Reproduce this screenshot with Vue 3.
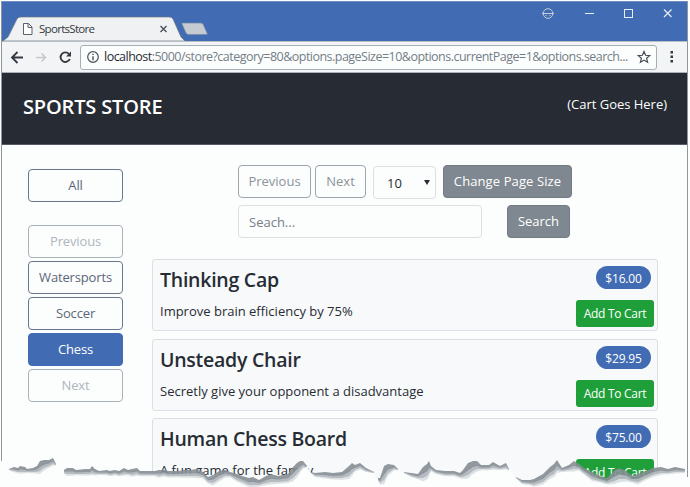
<script setup>
const categories = [
  { name: 'Previous', state: 'disabled' },
  { name: 'Watersports', state: '' },
  { name: 'Soccer', state: '' },
  { name: 'Chess', state: 'active' },
  { name: 'Next', state: 'disabled' },
]
const products = [
  { name: 'Thinking Cap', text: 'Improve brain efficiency by 75%', price: '$16.00' },
  { name: 'Unsteady Chair', text: 'Secretly give your opponent a disadvantage', price: '$29.95' },
  { name: 'Human Chess Board', text: 'A fun game for the family', price: '$75.00' },
]

// Ridge of the torn paper edge: [x, y, thickness]
const ridges = [
  [[9, 469, 1], [14, 467, 4], [18, 468, 4], [20, 466, 6], [25, 467, 5], [27, 469, 3], [33, 468, 4], [37, 466, 6], [40, 461, 10], [44, 460, 8], [49, 460, 6], [53, 458, 6], [56, 464, 1]],
  [[64, 470, 3], [67, 468, 6], [73, 468, 6], [76, 470, 4], [85, 469, 5], [90, 469, 5], [92, 466, 7], [95, 469, 5], [99, 471, 3], [107, 470, 4], [110, 471, 4], [115, 470, 4], [119, 471, 4], [124, 468, 6], [128, 470, 4], [132, 469, 6], [137, 468, 6], [140, 471, 4], [155, 471, 4], [159, 470, 6], [164, 470, 5], [168, 471, 5], [178, 471, 5], [184, 470, 6], [190, 470, 6], [197, 469, 7], [203, 472, 5], [208, 477, 5], [213, 475, 8], [219, 471, 8], [225, 470, 6], [230, 472, 4], [237, 474, 6], [242, 476, 6], [249, 478, 7], [253, 477, 8], [259, 480, 5], [266, 476, 7], [271, 474, 8], [278, 476, 6], [288, 474, 7], [293, 467, 11], [297, 463, 11], [300, 461, 9], [303, 461, 6], [307, 466, 1]],
  [[311, 472, 1], [315, 473, 3], [325, 472, 5], [333, 473, 5], [342, 472, 6], [349, 466, 10], [352, 463, 10], [355, 465, 5], [360, 463, 5], [366, 468, 3], [374, 472, 1]],
  [[378, 478, 2], [380, 478, 5], [384, 466, 14], [388, 464, 9], [394, 465, 4], [398, 469, 1]],
  [[404, 472, 1], [411, 473, 3], [418, 474, 4], [423, 467, 11], [427, 464, 12], [429, 461, 12], [431, 466, 4], [436, 470, 3], [445, 471, 4], [454, 471, 4], [460, 473, 4], [463, 470, 7], [468, 463, 12], [473, 461, 10], [477, 461, 8], [481, 465, 4], [489, 465, 4], [493, 462, 6], [500, 466, 3], [506, 463, 5], [509, 469, 1]],
  [[516, 477, 1], [522, 480, 3], [530, 480, 4], [534, 479, 6], [543, 474, 8], [550, 467, 9], [554, 464, 10], [557, 460, 10], [562, 468, 3], [569, 465, 5], [574, 461, 8], [579, 464, 5], [584, 468, 5], [592, 472, 7], [600, 476, 5], [607, 478, 5], [614, 471, 10], [619, 468, 11], [626, 471, 8], [632, 476, 5], [638, 474, 8], [646, 471, 7], [653, 468, 7], [661, 467, 6], [668, 469, 4], [675, 467, 5], [685, 469, 3]],
]
const line = (pts) => pts.map((p) => p.join(' ')).join(' L')
const band = (r, from, to) =>
  'M' + line(r.map(([x, y, t]) => [x, y + t * from])) + ' L' +
  line([...r].reverse().map(([x, y, t]) => [x, y + t * to])) + 'Z'
const paper = 'M0 461 H8 L' + line(ridges.flat().map(([x, y, t]) => [x, y + t])) + ' L690 472 V487 H0Z'
</script>

<template>
  <div class="shot">
    <div class="window">
      <div class="titlebar">
        <div class="tabs">
          <svg class="tabshape" width="208" height="25" viewBox="0 0 208 25">
            <path d="M0 25 L5 21 L14 3 Q15 1 18 1 H166 Q169 1 170 3 L178 21 L182 25Z" fill="#f0f1f3" stroke="#6c7682" stroke-width=".7" />
            <path d="M179 8 Q178 7 180 7 H197 Q199 7 200 8 L204 17 Q205 18.500 203 18.500 H186 Q184 18.500 183 17Z" fill="#c5cbd0" stroke="#7788a5" stroke-width=".7" />
            <path d="M20.500 7.500 h5 l3.500 3.500 v7.500 h-8.500z M25 7.500 v4 h4" fill="#fff" stroke="#59616a" />
            <path d="M157.500 10 l6 6 m0 -6 l-6 6" stroke="#4a515a" stroke-width="1.400" />
          </svg>
          <span class="tabname">SportsStore</span>
        </div>
        <svg class="controls" width="140" height="20" viewBox="0 0 140 20" fill="none" stroke="#e8edf5">
          <circle cx="8" cy="10.500" r="4.800" stroke="#c5ceda" />
          <path d="M2 10.500 h12 M5.500 12.500 h1 m3 0 h1" stroke="#c5ceda" />
          <path d="M45 10.500 h9" />
          <rect x="84.500" y="6.500" width="8" height="8" />
          <path d="M124 6.500 l7.500 7.500 m0 -7.500 l-7.500 7.500" stroke-width="1.200" />
        </svg>
      </div>
      <div class="navbar">
        <svg width="78" height="30" viewBox="0 0 78 30" fill="none">
          <path d="M21 15.500 H10.500 M15.500 10 L10 15.500 L15.500 21" stroke="#333941" stroke-width="1.800" />
          <path d="M34 15.500 H43.500 M39.500 11.500 L43.500 15.500 L39.500 19.500" stroke="#c3c8cd" stroke-width="1.500" />
          <path d="M67 12 A4.800 4.800 0 1 0 67.800 17" stroke="#333941" stroke-width="1.900" />
          <path d="M69 9.500 V14.500 H64Z" fill="#333941" />
        </svg>
        <div class="address">
          <svg width="14" height="14" viewBox="0 0 14 14" fill="none" stroke="#4b535c">
            <circle cx="7" cy="7" r="5.300" stroke-width="1.200" />
            <path d="M7 6.200 v4 M7 3.700 v1.400" stroke-width="1.400" />
          </svg>
          <span class="url"><b>localhost</b>:5000/store?category=80&amp;options.pageSize=10&amp;options.currentPage=1&amp;options.search...</span>
          <svg class="star" width="14" height="14" viewBox="0 0 14 14">
            <path d="M7 1.500 L8.600 5.300 L12.700 5.600 L9.600 8.300 L10.600 12.300 L7 10.100 L3.400 12.300 L4.400 8.300 L1.300 5.600 L5.400 5.300Z" fill="none" stroke="#444c55" stroke-width="1.200" />
          </svg>
        </div>
        <svg class="dots" width="4" height="14" viewBox="0 0 4 14" fill="#333941">
          <rect x=".5" y="1" width="2.500" height="2.500" /><rect x=".5" y="5.500" width="2.500" height="2.500" /><rect x=".5" y="10" width="2.500" height="2.500" />
        </svg>
      </div>
      <header class="banner">
        <span class="brand">SPORTS STORE</span>
        <span class="cart">(Cart Goes Here)</span>
      </header>
      <div class="content">
        <nav class="side">
          <button class="btn all">All</button>
          <button v-for="c in categories" :key="c.name" class="btn" :class="c.state">{{ c.name }}</button>
        </nav>
        <main>
          <div class="row">
            <button class="btn muted prev">Previous</button>
            <button class="btn muted next">Next</button>
            <div class="select"><span>10</span><i></i></div>
            <button class="btn solid change">Change Page Size</button>
          </div>
          <div class="row second">
            <div class="input">Seach...</div>
            <button class="btn solid search">Search</button>
          </div>
          <article v-for="p in products" :key="p.name" class="card">
            <div class="info">
              <h4>{{ p.name }}</h4>
              <p>{{ p.text }}</p>
            </div>
            <div class="buy">
              <span class="price">{{ p.price }}</span>
              <button class="add">Add To Cart</button>
            </div>
          </article>
        </main>
      </div>
    </div>
    <svg class="tear" width="690" height="487" viewBox="0 0 690 487">
      <path :d="paper" fill="#fcfdfd" />
      <g v-for="(r, i) in ridges" :key="i">
        <path :d="band(r, 0.6, 1.3)" fill="#d5d9dc" fill-opacity=".8" />
        <path :d="band(r, 0.5, 1)" fill="#b0b7bd" fill-opacity=".9" />
        <path :d="band(r, 0, 0.6)" fill="#858d94" fill-opacity=".9" />
      </g>
      <path d="M687.500 455 V477" stroke="#8f979e" />
    </svg>
  </div>
</template>

<style>
body { background: #fcfdfd; overflow: hidden; }
</style>

<style scoped>
* { box-sizing: border-box; }
.shot { position: relative; width: 690px; height: 487px; overflow: hidden; background: #fcfdfd; font-family: "Open Sans", "Noto Sans", sans-serif; font-size: 13px; color: #272c34; }
.window { width: 687px; height: 486px; margin: 1px 0 0 1px; border: 1px solid #8f979e; border-top: 0; border-bottom: 0; overflow: hidden; }
.titlebar { height: 40px; background: #416cb4; display: flex; justify-content: space-between; align-items: flex-end; border-top: 1px solid #6f8ec4; }
.tabs { height: 25px; width: 209px; display: flex; position: relative; }
.tabshape { position: absolute; left: 1px; bottom: 0; }
.tabname { position: relative; padding: 4px 0 0 37px; font-size: 11.500px; line-height: 18px; color: #333941; letter-spacing: -.7px; white-space: nowrap; }
.controls { align-self: flex-start; margin: 1px 7px 0 0; }
.navbar { height: 31px; background: #f3f4f5; border-top: 1px solid #b7bec6; display: flex; align-items: center; }
.address { width: 577px; height: 25px; border: 1px solid #a5afb8; border-radius: 3px; background: #fcfdfd; display: flex; align-items: center; padding-left: 5px; }
.url { width: 525px; flex: none; margin-left: 4px; font-size: 12.500px; line-height: 20px; color: #747e87; white-space: nowrap; letter-spacing: -.52px; }
.url b { font-weight: 400; color: #272c34; }
.star { margin-left: 8px; }
.dots { margin-left: 13px; }
.banner { height: 73px; background: #272c34; border-top: 1px solid #aab0b7; border-bottom: 1px solid #555b62; color: #fff; display: flex; justify-content: space-between; padding: 18px 20px 0 21px; }
.brand { font-size: 20px; font-weight: 600; line-height: 32px; letter-spacing: -.15px; }
.cart { line-height: 27px; letter-spacing: -.02px; }
.content { display: flex; padding: 20px 0 0 26px; }
.side { width: 95px; display: flex; flex-direction: column; gap: 3px; padding-top: 4px; letter-spacing: -.15px; }
.btn { height: 33px; border: 1px solid #68778b; border-radius: 4px; background: #fcfdfd; color: #5b6778; font: inherit; letter-spacing: inherit; line-height: 29px; padding: 0; text-align: center; white-space: nowrap; flex: none; }
.all { margin-bottom: 20px; }
.disabled { color: #aeb6bd; border-color: #a9b2b9; }
.active { background: #416cb4; border-color: #416cb4; color: #fff; }
main { width: 506px; margin-left: 29px; }
.row { display: flex; padding-left: 86px; height: 40px; }
.muted { color: #8b949c; border-color: #9ca6ae; }
.prev { width: 73px; }
.next { width: 51px; margin-left: 4px; }
.select { width: 63px; height: 33px; margin: 1px 0 0 7px; border: 1px solid #dce0e4; border-radius: 4px; display: flex; align-items: center; justify-content: space-between; padding: 0 5px 0 13px; }
.select i { border: 3px solid transparent; border-top: 5px solid #272c34; border-bottom: 0; }
.solid { background: #7f8890; border-color: #737b83; color: #fff; }
.change { width: 129px; margin-left: 7px; letter-spacing: .1px; }
.second { height: 54px; }
.input { width: 244px; height: 33px; border: 1px solid #dce0e4; border-radius: 4px; padding-left: 10px; line-height: 33px; color: #747e87; }
.search { width: 63px; margin-left: 25px; }
.card { height: 72px; margin-bottom: 7.500px; border: 1px solid #dce0e4; border-radius: 3px; background: #f8f9fa; display: flex; justify-content: space-between; padding: 6px 3px 0 7px; }
.info h4 { margin: 0; font-size: 19.500px; font-weight: 600; line-height: 28px; letter-spacing: -.25px; }
.info p { margin: 7px 0 0; line-height: 20px; }
.buy { display: flex; flex-direction: column; align-items: flex-end; }
.price { width: 55px; height: 23px; margin-right: 3px; border-radius: 12px; background: #416cb4; color: #fff; text-align: center; font-size: 12px; line-height: 25px; letter-spacing: -.2px; }
.add { width: 78px; height: 27px; margin-top: 11px; padding: 1px 0 0; border: 0; border-radius: 3px; background: #1e9f3a; color: #fff; font: inherit; font-size: 12px; line-height: 26px; letter-spacing: -.3px; }
.tear { position: absolute; left: 0; top: 0; }
</style>
